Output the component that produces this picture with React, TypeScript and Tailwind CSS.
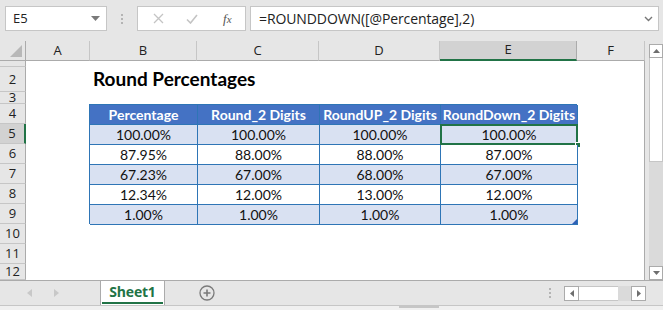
import React from 'react';

const columns = [
  { key: 'A', width: 64 },
  { key: 'B', width: 107 },
  { key: 'C', width: 122 },
  { key: 'D', width: 121 },
  { key: 'E', width: 137 },
  { key: 'F', width: 68 },
];

// row number + height in px
const rows = [
  { n: 1, h: 6 },
  { n: 2, h: 25 },
  { n: 3, h: 12 },
  { n: 4, h: 20 },
  { n: 5, h: 20 },
  { n: 6, h: 20 },
  { n: 7, h: 20 },
  { n: 8, h: 20 },
  { n: 9, h: 20 },
  { n: 10, h: 20 },
  { n: 11, h: 20 },
  { n: 12, h: 16 },
];

const headers = ['Percentage', 'Round_2 Digits', 'RoundUP_2 Digits', 'RoundDown_2 Digits'];

const data = [
  ['100.00%', '100.00%', '100.00%', '100.00%'],
  ['87.95%', '88.00%', '88.00%', '87.00%'],
  ['67.23%', '67.00%', '68.00%', '67.00%'],
  ['12.34%', '12.00%', '13.00%', '12.00%'],
  ['1.00%', '1.00%', '1.00%', '1.00%'],
];

const uiFont = "font-['Open_Sans','Noto_Sans',sans-serif]";
const cellFont = "font-['Lato','Liberation_Sans',sans-serif]";

const Toolbar: React.FC = () => (
  <div className={`h-[41px] flex items-start pt-[6px] pl-[5px] ${uiFont}`}>
    {/* name box */}
    <div className="w-[102px] h-[25px] bg-white border border-[#c6c6c6] flex items-center pl-[7px] pr-[6px]">
      <span className="text-[13px] text-[#222] flex-1">E5</span>
      <svg width="9" height="5" viewBox="0 0 9 5">
        <path d="M0 0h9L4.5 5z" fill="#7a7a7a" />
      </svg>
    </div>
    {/* grip dots */}
    <div className="w-[30px] h-[25px] flex flex-col items-center justify-center gap-[2px]">
      <span className="w-[2px] h-[2px] bg-[#b4b4b4]" />
      <span className="w-[2px] h-[2px] bg-[#b4b4b4]" />
      <span className="w-[2px] h-[2px] bg-[#b4b4b4]" />
    </div>
    {/* cancel / enter / fx */}
    <div className="w-[109px] h-[25px] bg-white border border-[#c6c6c6] flex items-center">
      <svg className="ml-[15px]" width="11" height="11" viewBox="0 0 11 11">
        <path d="M1 1l9 9M10 1l-9 9" stroke="#c4c4c4" strokeWidth="1.3" />
      </svg>
      <svg className="ml-[22px]" width="12" height="10" viewBox="0 0 12 10">
        <path d="M1 5.5l3.5 3.5L11 1" stroke="#c4c4c4" strokeWidth="1.6" fill="none" />
      </svg>
      <span className="ml-[25px] text-[13px] italic text-[#555] font-['Liberation_Serif',serif] leading-none">
        f<span className="text-[11px]">x</span>
      </span>
    </div>
    {/* formula input */}
    <div className="ml-[4px] w-[409px] h-[25px] bg-white border border-[#c6c6c6] flex items-center pl-[8px] pr-[5px]">
      <span className="flex-1 text-[14px] text-[#222] tracking-[-0.1px]">=ROUNDDOWN([@Percentage],2)</span>
      <svg width="9" height="6" viewBox="0 0 9 6">
        <path d="M1 1l3.5 3.5L8 1" stroke="#777" strokeWidth="1.4" fill="none" />
      </svg>
    </div>
  </div>
);

const Sheet: React.FC = () => {
  const gridCols = 'grid-cols-[26px_64px_107px_122px_121px_137px_68px]';
  const gridRows = 'grid-rows-[20px_6px_25px_12px_20px_20px_20px_20px_20px_20px_20px_20px_16px]';

  return (
    <div className={`grid ${gridCols} ${gridRows} w-[645px] h-[239px] relative`}>
      {/* corner */}
      <div className="col-start-1 row-start-1 bg-[#e6e6e6] border-r border-b border-[#ababab] flex items-end justify-end pr-[3px] pb-[3px]">
        <svg width="12" height="12" viewBox="0 0 12 12">
          <path d="M12 0v12H0z" fill="#b8b8b8" />
        </svg>
      </div>
      {/* column headers */}
      {columns.map((c, i) => (
        <div
          key={c.key}
          className={`row-start-1 flex items-center justify-center text-[13px] text-[#222] ${uiFont} ${
            c.key === 'E'
              ? 'bg-[#d2d2d2] border-b-2 border-b-[#217346] border-r border-r-[#ababab]'
              : 'bg-[#e6e6e6] border-b border-b-[#ababab] border-r border-r-[#c6c6c6]'
          }`}
          style={{ gridColumnStart: i + 2 }}
        >
          {c.key}
        </div>
      ))}
      {/* row headers */}
      {rows.map((r, i) => (
        <div
          key={r.n}
          className={`col-start-1 flex items-center justify-center overflow-hidden text-[13px] text-[#222] leading-none ${uiFont} ${
            r.n === 5
              ? 'bg-[#d2d2d2] border-r-2 border-r-[#217346] border-b border-b-[#c6c6c6]'
              : 'bg-[#e6e6e6] border-r border-r-[#ababab] border-b border-b-[#c6c6c6]'
          }`}
          style={{ gridRowStart: i + 2 }}
        >
          {r.n > 1 ? r.n : ''}
        </div>
      ))}
      {/* white sheet area */}
      <div className="col-start-2 col-end-8 row-start-2 row-end-14 bg-white border-r border-[#ababab]" />

      {/* title */}
      <div className={`col-start-3 col-end-6 row-start-3 flex items-center pl-[3px] text-[19px] font-bold text-black ${cellFont} z-10`}>
        Round Percentages
      </div>

      {/* table */}
      <div className="col-start-3 col-end-7 row-start-5 row-end-11 z-10 -ml-px grid grid-cols-[108px_122px_121px_137px] grid-rows-[20px_20px_20px_20px_20px_20px] border-l border-t border-[#2e75b6]">
        {headers.map((h) => (
          <div
            key={h}
            className={`bg-[#4472c4] text-white font-bold text-[14px] flex items-center justify-center border-r border-b border-[#2e75b6] ${cellFont}`}
          >
            {h}
          </div>
        ))}
        {data.map((row, ri) =>
          row.map((v, ci) => {
            const selected = ri === 0 && ci === 3;
            return (
              <div
                key={`${ri}-${ci}`}
                className={`relative flex items-center justify-center text-[14px] text-[#111] border-r border-b border-[#2e75b6] ${cellFont} ${
                  ri % 2 === 0 ? 'bg-[#d9e1f2]' : 'bg-white'
                }`}
              >
                {v}
                {selected && (
                  <>
                    <div className="absolute -left-px -top-px -right-px -bottom-px border-2 border-[#217346]" />
                    <div className="absolute -right-[4px] -bottom-[4px] w-[6px] h-[6px] bg-[#217346] border border-white" />
                  </>
                )}
                {ri === data.length - 1 && ci === 3 && (
                  <svg className="absolute right-0 bottom-0" width="5" height="5" viewBox="0 0 5 5">
                    <path d="M5 0v5H0z" fill="#2e5fb6" />
                  </svg>
                )}
              </div>
            );
          })
        )}
      </div>
    </div>
  );
};

const VScroll: React.FC = () => (
  <div className="w-[18px] h-[239px] bg-[#e6e6e6] pl-[4px] pt-[3px] flex flex-col">
    <div className="h-[14px] bg-white border border-[#ababab] flex items-center justify-center">
      <svg width="7" height="4" viewBox="0 0 7 4">
        <path d="M0 4h7L3.5 0z" fill="#6e6e6e" />
      </svg>
    </div>
    <div className="h-[104px] bg-white border-x border-b border-[#c6c6c6]" />
    <div className="flex-1 bg-[#dadada]" />
    <div className="h-[14px] bg-white border border-[#ababab] flex items-center justify-center">
      <svg width="7" height="4" viewBox="0 0 7 4">
        <path d="M0 0h7L3.5 4z" fill="#6e6e6e" />
      </svg>
    </div>
  </div>
);

const TabBar: React.FC = () => (
  <div className={`h-[25px] flex items-stretch border-t border-[#ababab] bg-[#e6e6e6] ${uiFont}`}>
    <div className="w-[100px] flex items-center pl-[27px] gap-[22px]">
      <svg width="5" height="8" viewBox="0 0 5 8">
        <path d="M5 0v8L0 4z" fill="#c8c8c8" />
      </svg>
      <svg width="5" height="8" viewBox="0 0 5 8">
        <path d="M0 0v8l5-4z" fill="#c8c8c8" />
      </svg>
    </div>
    <div className="w-[65px] -mt-px bg-white border-x border-t border-[#ababab] flex flex-col">
      <div className="flex-1 flex items-center justify-center text-[14px] font-bold text-[#217346] tracking-[-0.2px]">
        Sheet1
      </div>
      <div className="h-[2px] mx-px mb-[1px] bg-[#217346]" />
    </div>
    <div className="w-[34px]" />
    <div className="flex items-center">
      <svg width="16" height="16" viewBox="0 0 16 16">
        <circle cx="8" cy="8" r="7" stroke="#7a7a7a" strokeWidth="1.3" fill="none" />
        <path d="M8 4.5v7M4.5 8h7" stroke="#7a7a7a" strokeWidth="1.6" />
      </svg>
    </div>
    <div className="flex-1" />
    <div className="flex items-center gap-[2px] mr-[13px] flex-col justify-center">
      <span className="w-[2px] h-[2px] bg-[#b4b4b4]" />
      <span className="w-[2px] h-[2px] bg-[#b4b4b4]" />
      <span className="w-[2px] h-[2px] bg-[#b4b4b4]" />
    </div>
    <div className="flex items-center mr-[17px]">
      <div className="w-[82px] h-[15px] flex bg-[#dadada]">
        <div className="w-[15px] bg-white border border-[#ababab] flex items-center justify-center">
          <svg width="4" height="7" viewBox="0 0 4 7">
            <path d="M4 0v7L0 3.5z" fill="#6e6e6e" />
          </svg>
        </div>
        <div className="w-[39px] bg-white border-y border-[#c6c6c6]" />
        <div className="flex-1" />
        <div className="w-[15px] bg-white border border-[#ababab] flex items-center justify-center">
          <svg width="4" height="7" viewBox="0 0 4 7">
            <path d="M0 0v7l4-3.5z" fill="#6e6e6e" />
          </svg>
        </div>
      </div>
    </div>
  </div>
);

const App: React.FC = () => {
  return (
    <div className="w-[663px] h-[310px] bg-[#e6e6e6] overflow-hidden">
      <Toolbar />
      <div className="flex">
        <Sheet />
        <VScroll />
      </div>
      <TabBar />
      <div className="h-[5px] border-t border-[#c6c6c6] bg-[#f0f0f0] flex">
        <div className="ml-[399px] w-[40px] h-[2px] bg-[#c6c6c6]" />
      </div>
    </div>
  );
};

export default App;
